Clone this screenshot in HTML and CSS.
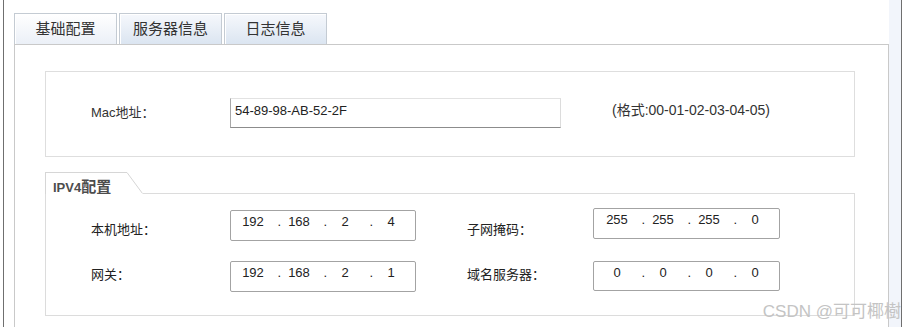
FILE: index.html
```html
<!DOCTYPE html>
<html lang="zh">
<head>
<meta charset="utf-8">
<title>基础配置</title>
<link rel="stylesheet" href="styles.css">
</head>
<body>
<div class="frame">
  <div class="main">
    <div class="tabs">
      <div class="tab tab-active">基础配置</div>
      <div class="tab">服务器信息</div>
      <div class="tab">日志信息</div>
    </div>
    <div class="panel">
      <div class="mac-box">
        <span class="mac-label">Mac地址：</span>
        <div class="text-input">54-89-98-AB-52-2F</div>
        <span class="hint">(格式:00-01-02-03-04-05)</span>
      </div>
      <div class="group">
        <div class="group-head">
          <div class="legend">IPV4<span class="legend-cjk">配置</span></div>
          <svg class="slant" width="16" height="22" viewBox="0 0 16 22"><line x1="0" y1="0.5" x2="15.5" y2="21.5" stroke="#d6d6d6" stroke-width="1"/></svg>
          <div class="head-fill"></div>
        </div>
        <div class="group-body">
          <span class="lbl lbl-top">本机地址：</span>
          <div class="cell"><div class="ip ip-left"><span class="seg">192</span><span class="dot">.</span><span class="seg">168</span><span class="dot">.</span><span class="seg">2</span><span class="dot">.</span><span class="seg">4</span></div></div>
          <span class="lbl lbl-top lbl-right">子网掩码：</span>
          <div class="cell cell-up"><div class="ip ip-right"><span class="seg">255</span><span class="dot">.</span><span class="seg">255</span><span class="dot">.</span><span class="seg">255</span><span class="dot">.</span><span class="seg">0</span></div></div>

          <span class="lbl lbl-bottom">网关：</span>
          <div class="cell"><div class="ip ip-left"><span class="seg">192</span><span class="dot">.</span><span class="seg">168</span><span class="dot">.</span><span class="seg">2</span><span class="dot">.</span><span class="seg">1</span></div></div>
          <span class="lbl lbl-bottom lbl-right">域名服务器：</span>
          <div class="cell"><div class="ip ip-right ip-short"><span class="seg">0</span><span class="dot">.</span><span class="seg">0</span><span class="dot">.</span><span class="seg">0</span><span class="dot">.</span><span class="seg">0</span></div></div>
        </div>
      </div>
    </div>
  </div>
  <div class="gutter"></div>
  <div class="watermark">CSDN @可可椰樹</div>
</div>
</body>
</html>
```
FILE: styles.css
```css
html, body {
  margin: 0;
  padding: 0;
  background: #ffffff;
}

body {
  font-family: "Liberation Sans", "Noto Sans CJK SC", sans-serif;
  color: #333333;
  font-size: 13px;
}

.frame {
  position: relative;
  box-sizing: border-box;
  margin-left: 3px;
  width: 899px;
  height: 327px;
  border-left: 1px solid #6f6f6f;
  border-right: 1px solid #6f6f6f;
  display: flex;
  overflow: hidden;
}

.main {
  width: 885px;
  flex: none;
  box-sizing: border-box;
  padding: 13px 0 0 10px;
  display: flex;
  flex-direction: column;
}

.gutter {
  flex: 1;
  background: #f2f5fb;
}

.tabs {
  display: flex;
  gap: 2px;
  height: 31px;
}

.tab {
  box-sizing: border-box;
  width: 103px;
  height: 31px;
  border: 1px solid #c4cbd3;
  border-bottom: none;
  background: linear-gradient(#f6f8fc, #dbe5f1);
  box-shadow: inset 1px 1px 0 #ffffff;
  font-size: 15px;
  line-height: 30px;
  text-align: center;
  color: #333333;
}

.tab-active {
  background: linear-gradient(#ffffff, #ebf0f7);
}

.panel {
  flex: 1;
  box-sizing: border-box;
  border: 1px solid #c9c9c9;
  border-bottom: none;
  padding: 26px 33px 0 30px;
}

.mac-box {
  box-sizing: border-box;
  height: 86px;
  border: 1px solid #dedede;
  padding: 26px 0 0 45px;
  display: flex;
  align-items: flex-start;
}

.mac-label {
  width: 139px;
  flex: none;
  margin-top: 6px;
  line-height: 18px;
  font-size: 13px;
}

.text-input {
  box-sizing: border-box;
  width: 331px;
  height: 30px;
  border: 1px solid;
  border-color: #e2e2e2 #dcdcdc #8c8c8c #a8a8a8;
  padding: 4px 4px 0;
  font-size: 13px;
  line-height: 16px;
  color: #222222;
}

.hint {
  margin-left: 51px;
  margin-top: 3px;
  font-size: 14px;
  line-height: 18px;
  color: #333333;
}

.group {
  margin-top: 15px;
}

.group-head {
  display: flex;
  height: 22px;
}

.legend {
  box-sizing: border-box;
  width: 82px;
  height: 22px;
  border-top: 1px solid #d6d6d6;
  border-left: 1px solid #d6d6d6;
  padding: 6px 0 0 7px;
  font-size: 13px;
  line-height: 16px;
  font-weight: bold;
  color: #4d4d4d;
  white-space: nowrap;
}

.legend-cjk {
  font-size: 15px;
}

.slant {
  display: block;
  flex: none;
}

.head-fill {
  flex: 1;
  box-sizing: border-box;
  height: 22px;
  border-bottom: 1px solid #dcdcdc;
}

.group-body {
  box-sizing: border-box;
  height: 122px;
  border: 1px solid #dcdcdc;
  border-top: none;
  padding: 16px 0 0 45px;
  display: grid;
  grid-template-columns: 139px 237px 126px 187px;
  grid-auto-rows: 31px;
  row-gap: 20px;
  align-items: start;
}

.lbl {
  font-size: 13px;
  line-height: 18px;
  color: #222222;
}

.lbl-top {
  margin-top: 11px;
}

.lbl-bottom {
  margin-top: 5px;
}

.cell-up {
  margin-top: -2px;
}

.ip {
  box-sizing: border-box;
  height: 31px;
  border: 1px solid #a3a3a3;
  border-radius: 2px;
  padding: 3px 0 0 4px;
  display: flex;
  font-size: 13px;
  line-height: 16px;
  color: #222222;
}

.ip-left {
  width: 186px;
}

.ip-right {
  width: 187px;
  padding-left: 5px;
}

.ip-short {
  height: 30px;
}

.seg {
  width: 36px;
  text-align: center;
}

.dot {
  width: 10px;
  text-align: right;
}

.watermark {
  position: absolute;
  right: 0;
  bottom: 5px;
  font-size: 17px;
  line-height: 20px;
  color: #c4c4c4;
  white-space: nowrap;
}
```
